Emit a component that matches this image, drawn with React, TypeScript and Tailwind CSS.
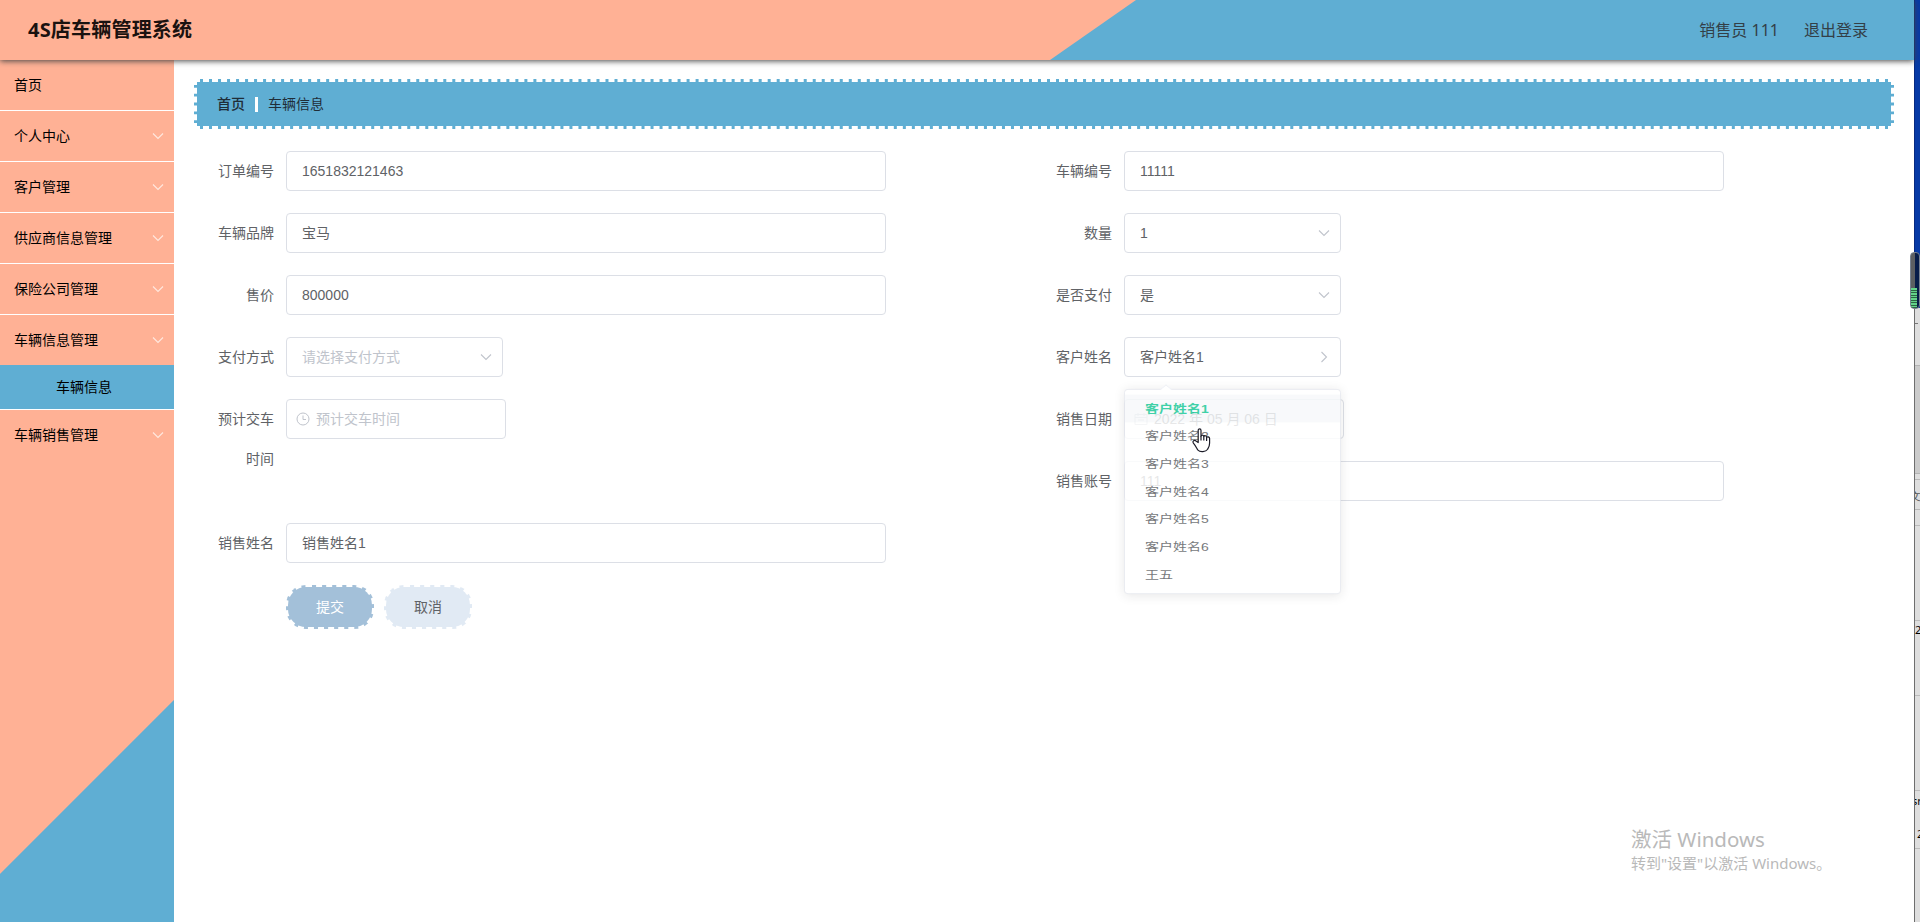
import type { ReactNode } from "react";
import { clsx } from "clsx";

const menu = [
  { label: "首页" },
  { label: "个人中心", arrow: true },
  { label: "客户管理", arrow: true },
  { label: "供应商信息管理", arrow: true },
  { label: "保险公司管理", arrow: true },
  { label: "车辆信息管理", arrow: true, child: "车辆信息" },
  { label: "车辆销售管理", arrow: true },
];

const customers = [
  "客户姓名1",
  "客户姓名2",
  "客户姓名3",
  "客户姓名4",
  "客户姓名5",
  "客户姓名6",
  "王五",
];

function Chevron({ className }: { className?: string }) {
  return (
    <svg
      className={clsx("shrink-0", className)}
      width="12"
      height="12"
      viewBox="0 0 12 12"
      fill="none"
      stroke="currentColor"
      strokeWidth="1.1"
      aria-hidden
    >
      <path d="M1 3.5 6 8.5 11 3.5" />
    </svg>
  );
}

function Header() {
  return (
    <header className="relative z-10 flex h-[60px] shrink-0 items-center justify-between bg-[#5faed3] pr-[46px] pl-7 shadow-[0_1px_6px_#444]">
      <svg
        className="absolute inset-0"
        width="1914"
        height="60"
        viewBox="0 0 1914 60"
        aria-hidden
      >
        <path fill="#ffb195" d="M0 0H1136L1050 60H0Z" />
      </svg>
      <h1 className="relative text-xl font-bold tracking-[0.2px] text-[#1a1210]">
        4S店车辆管理系统
      </h1>
      <div className="relative flex gap-[25px] text-base text-[#333f47]">
        <span>销售员 111</span>
        <span>退出登录</span>
      </div>
    </header>
  );
}

function Sidebar() {
  return (
    <aside className="w-[174px] shrink-0 bg-[linear-gradient(135deg,#ffb195_0,#ffb195_575px,#5faed3_576px)] text-sm text-black">
      {menu.map((item, i) => (
        <div
          key={item.label}
          className={clsx(i < menu.length - 1 && "border-b border-white")}
        >
          <div className="flex h-[50px] items-center justify-between pr-[10px] pl-[14px]">
            <span>{item.label}</span>
            {item.arrow && <Chevron className="text-[#ffe8df]" />}
          </div>
          {item.child && (
            <div className="flex h-11 items-center bg-[#5faed3] pl-14">
              {item.child}
            </div>
          )}
        </div>
      ))}
    </aside>
  );
}

function Field({ label, children }: { label: string; children: ReactNode }) {
  return (
    <div className="mb-[22px] flex items-start">
      <label className="w-20 shrink-0 pr-3 text-right leading-10">{label}</label>
      {children}
    </div>
  );
}

function Box({
  className,
  children,
}: {
  className: string;
  children: ReactNode;
}) {
  return (
    <div
      className={clsx(
        "flex h-10 items-center rounded border border-[#dcdfe6] bg-white",
        className,
      )}
    >
      {children}
    </div>
  );
}

function TextBox({ value }: { value: string }) {
  return <Box className="w-[600px] px-[15px]">{value}</Box>;
}

function SelectBox({
  value,
  placeholder,
  open,
}: {
  value?: string;
  placeholder?: string;
  open?: boolean;
}) {
  return (
    <Box className="w-[217px] justify-between pr-[10px] pl-[15px]">
      <span className={clsx(!value && "text-[#c0c4cc]")}>
        {value ?? placeholder}
      </span>
      <Chevron className={clsx("text-[#c0c4cc]", open && "-rotate-90")} />
    </Box>
  );
}

function Clock() {
  return (
    <svg
      className="mr-1.5 text-[#c0c4cc]"
      width="14"
      height="14"
      viewBox="0 0 14 14"
      fill="none"
      stroke="currentColor"
      aria-hidden
    >
      <circle cx="7" cy="7" r="6" />
      <path d="M7 3.5V7.5H10" />
    </svg>
  );
}

function Calendar() {
  return (
    <svg
      className="mr-1.5 text-[#c0c4cc]"
      width="14"
      height="14"
      viewBox="0 0 14 14"
      fill="none"
      stroke="currentColor"
      aria-hidden
    >
      <path d="M1 2.5H13V12.5H1ZM1 5.5H13M4 1V4M10 1V4M4 8H10" />
    </svg>
  );
}

// Caught halfway through its opening transition, hence the squeeze and fade.
function CustomerMenu() {
  return (
    <div className="absolute top-[52px] left-20 z-10 w-[217px] origin-top scale-y-[0.814] rounded border border-[#e4e7ed] bg-white py-1.5 opacity-85 shadow-[0_2px_12px_rgba(0,0,0,0.1)]">
      <span className="absolute -top-[5px] left-[37px] size-2 rotate-45 border-t border-l border-[#ebeef5] bg-white" />
      {customers.map((name, i) => (
        <div
          key={name}
          className={clsx(
            "relative h-[34px] px-5 leading-[34px]",
            i === 0 && "bg-[#f5f7fa]/80 font-bold text-[#1fc99a]",
          )}
        >
          {name}
        </div>
      ))}
    </div>
  );
}

function HandCursor() {
  return (
    <svg
      className="absolute top-[91px] left-[148px] z-20"
      width="19"
      height="25"
      viewBox="0 0 19 25"
      fill="#fff"
      stroke="#1c1c28"
      strokeWidth="1.2"
      strokeLinejoin="round"
      aria-hidden
    >
      <path d="M6.2 14.5V2.4C6.2 .3 9 .3 9 2.4V8.2C9.3 6.5 11.8 6.8 11.8 8.6 12.2 7.2 14.6 7.5 14.6 9.4 15.2 8.3 17.6 8.8 17.6 10.6V15C17.6 19 16 20 15.4 21.5 14 23.9 8 24.3 6 22.2 4.8 20.5 3.5 17.5 1.4 15.1 .1 12.9 2.4 11.7 4 13Z" />
      <path d="M9 8V12.5M11.8 8.6V12.5M14.6 9.4V13" />
    </svg>
  );
}

function OrderForm() {
  return (
    <div className="mt-[22px] ml-3 flex font-['Liberation_Sans','Noto_Sans_CJK_SC',sans-serif] text-sm text-[#606266]">
      <div className="w-[838px]">
        <Field label="订单编号">
          <TextBox value="1651832121463" />
        </Field>
        <Field label="车辆品牌">
          <TextBox value="宝马" />
        </Field>
        <Field label="售价">
          <TextBox value="800000" />
        </Field>
        <Field label="支付方式">
          <SelectBox placeholder="请选择支付方式" />
        </Field>
        <div className="h-[124px]">
          <Field label="预计交车时间">
            <Box className="w-[220px] pl-[9px] text-[#c0c4cc]">
              <Clock />
              预计交车时间
            </Box>
          </Field>
        </div>
        <Field label="销售姓名">
          <TextBox value="销售姓名1" />
        </Field>
        <div className="flex gap-[10px] pl-20">
          <button className="h-11 w-22 rounded-[20px] border-2 border-dashed border-white bg-[#a3c0d9] text-white">
            提交
          </button>
          <button className="h-11 w-22 rounded-[20px] border-2 border-dashed border-white bg-[#e1eaf4] text-[#606266]">
            取消
          </button>
        </div>
      </div>
      <div>
        <Field label="车辆编号">
          <TextBox value="11111" />
        </Field>
        <Field label="数量">
          <SelectBox value="1" />
        </Field>
        <Field label="是否支付">
          <SelectBox value="是" />
        </Field>
        <div className="relative">
          <Field label="客户姓名">
            <SelectBox value="客户姓名1" open />
          </Field>
          <CustomerMenu />
          <HandCursor />
        </div>
        <Field label="销售日期">
          <Box className="w-[220px] pl-[9px]">
            <Calendar />
            2022 年 05 月 06 日
          </Box>
        </Field>
        <Field label="销售账号">
          <TextBox value="111" />
        </Field>
      </div>
    </div>
  );
}

// Sliver of the desktop and the window behind the browser.
function DesktopEdge() {
  return (
    <div className="relative flex w-1.5 shrink-0 flex-col font-['Noto_Sans'] text-[11px] leading-none text-black">
      <div className="h-[308px] border-l border-[#082a80] bg-[#073aa6]" />
      <div className="flex grow flex-col overflow-hidden border-l border-[#6e6e6e] bg-[#dedede]">
        <div className="h-[57px] shrink-0 pt-[15px]">
          <div className="h-px w-[3px] bg-[#777]" />
        </div>
        <div className="h-[109px] shrink-0 border-y border-[#b4b4b4] bg-[#cbcbcb]" />
        <div className="mt-[5px] h-[31px] shrink-0 border-y border-[#b8b8b8] pt-2.5">
          <span className="-ml-[5px] text-[#555]">文</span>
        </div>
        <div className="mt-[15px] h-[96px] shrink-0 border-y border-[#bbb]" />
        <div className="h-[75px] shrink-0 border-b border-[#bbb] pt-[3px]">2</div>
        <div className="h-[95px] shrink-0 border-b border-[#bbb]" />
        <div className="h-[58px] shrink-0 border-b border-[#bbb] pt-1">
          <div className="-ml-[3px]">sr</div>
          <div className="mt-[22px] ml-[2px]">2</div>
        </div>
      </div>
      <div className="absolute top-[252px] -left-1 flex h-[57px] w-2.5 flex-col justify-end overflow-hidden rounded-[4px] border border-[#75808f] bg-[linear-gradient(90deg,#5c5f62_45%,#071d49_46%)]">
        <div className="h-5 w-[6px] bg-[repeating-linear-gradient(0deg,#2d6544_0,#2d6544_1px,#64d48a_1px,#64d48a_2.5px)]" />
      </div>
    </div>
  );
}

export default function App() {
  return (
    <div className="flex h-[922px] w-[1920px] overflow-hidden bg-white font-['Noto_Sans','Noto_Sans_CJK_SC',sans-serif]">
      <div className="relative flex w-[1914px] shrink-0 flex-col">
        <Header />
        <div className="flex grow">
          <Sidebar />
          <main className="grow px-5 pt-[19px]">
            <nav className="flex h-[50px] items-center border-3 border-dashed border-white bg-[#5faed3] pl-5 text-sm text-[#1f2d38]">
              <span className="font-medium">首页</span>
              <span className="mx-[10px] h-[15px] w-[3px] bg-white" />
              <span>车辆信息</span>
            </nav>
            <OrderForm />
          </main>
        </div>
        <div className="absolute top-[826px] left-[1631px] text-[#b9b9b9]">
          <div className="text-[20.5px] leading-[27px]">激活 Windows</div>
          <div className="text-[15px] leading-[21px]">
            转到"设置"以激活 Windows。
          </div>
        </div>
      </div>
      <DesktopEdge />
    </div>
  );
}
